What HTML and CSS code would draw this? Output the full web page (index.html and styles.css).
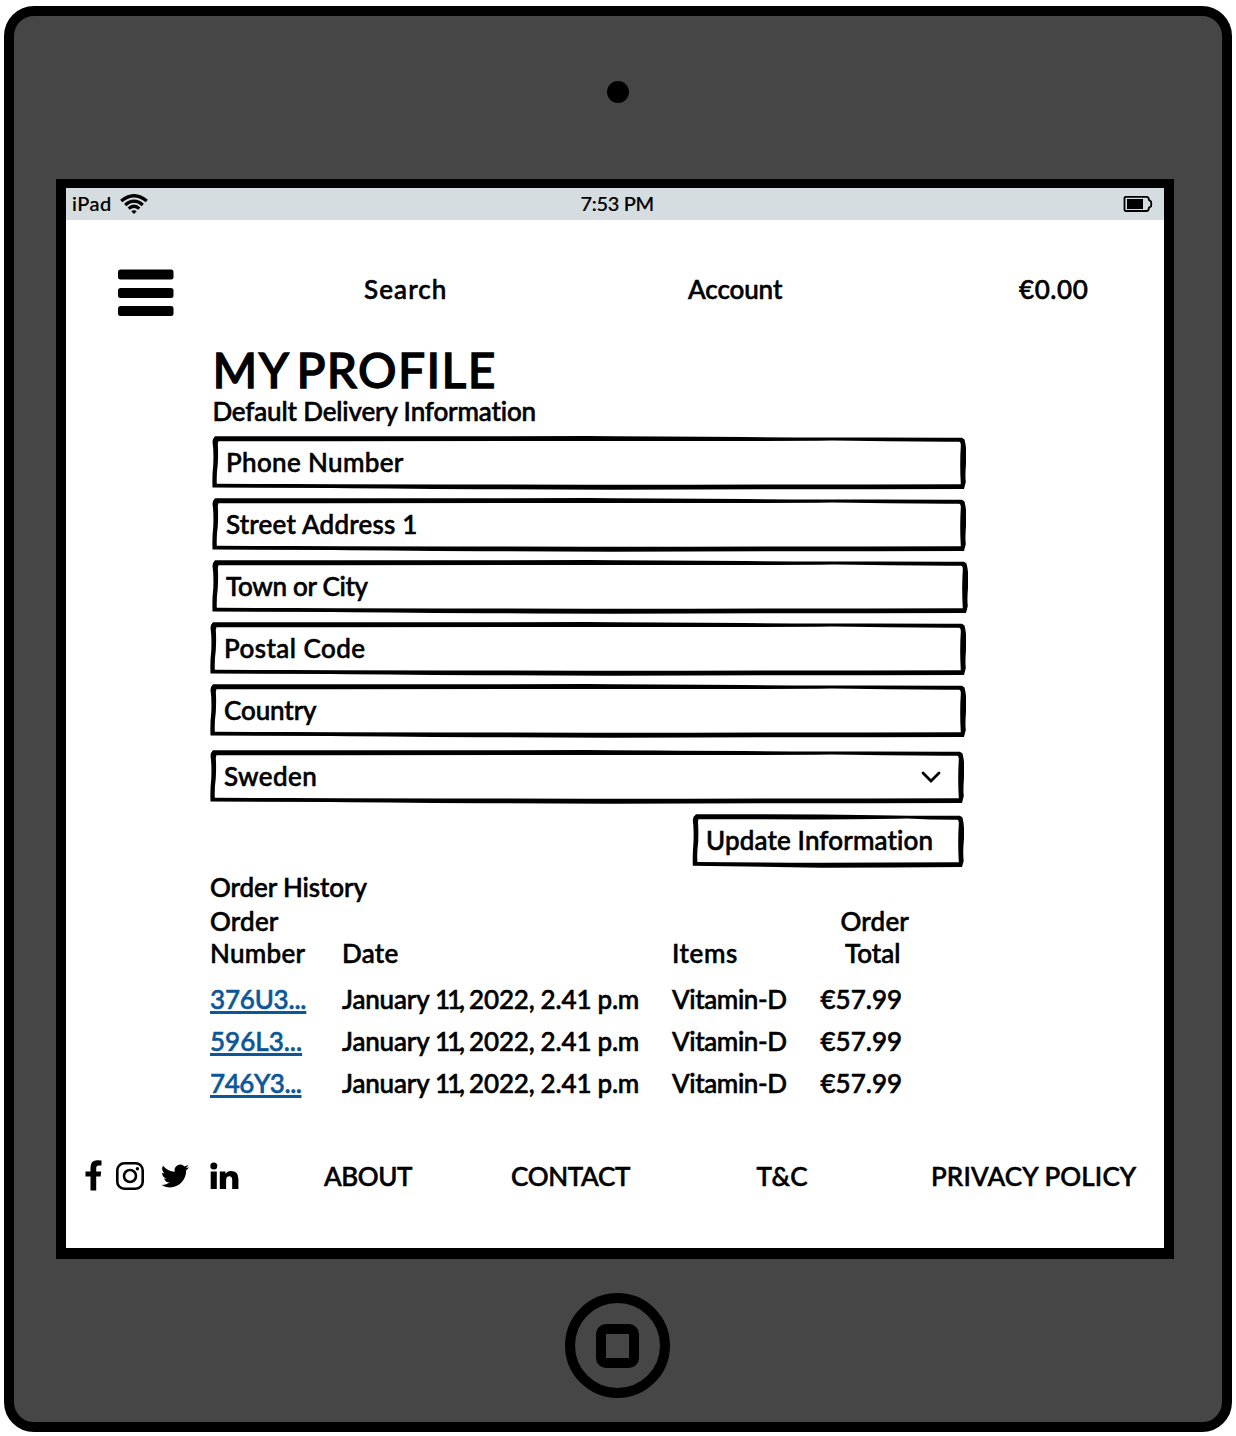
FILE: index.html
```html
<!DOCTYPE html>
<html lang="en">
<head>
<meta charset="utf-8">
<title>My Profile</title>
<link rel="stylesheet" href="styles.css">
</head>
<body>
<svg class="defs" aria-hidden="true">
  <symbol id="box" viewBox="0 0 754 54" preserveAspectRatio="none">
    <path fill-rule="evenodd" d="M1 3 L3 .3 Q200 .2 376 .1 Q560 1.400 660 1.500 T750 1.800 L752.500 3.500 Q755.200 14 754 28 Q753 40 753.800 46 L752 52.900 Q600 53.100 400 53.700 Q220 53 120 51.900 L.5 51.500 Q0 40 1.300 28 Q1.800 14 .5 6Z M6.400 5.300 Q200 5.200 376 5 Q560 5.300 620 4.600 Q700 5.700 747 5.800 Q749 6 748.800 10 Q747.600 28 748.800 48.200 Q600 48.400 400 48.800 Q200 48.400 80 48 L4.800 47.800 Q4.400 38 5.800 28 Q6.400 16 5.800 8Z"/>
  </symbol>
</svg>
<div class="device">
  <div class="camera"></div>
  <div class="screen">
    <div class="status">
      <div class="carrier"><span class="t ipad">iPad</span>
        <svg width="28" height="20" viewBox="0 0 28 20" fill="none" stroke="#000" stroke-width="3.300"><path d="M1.200 7Q14-3.600 26.800 7M5.200 10.900Q14 3.400 22.800 10.900M8.700 14.600Q14 9.800 19.300 14.600"/><path d="M11.300 17.300Q14 15 16.700 17.300L14 19.900Z" fill="#000" stroke="none"/></svg>
      </div>
      <span class="t clock">7:53 PM</span>
      <svg width="30" height="18" viewBox="0 0 30 18"><path d="M3 1.800H23.500Q25.800 1.800 26 5L28 6.500Q28.600 9 28 11.500L26 12.600Q25.800 16 23.500 16H3Q1.500 16 1.500 14.500V3.300Q1.500 1.800 3 1.800Z" fill="none" stroke="#000" stroke-width="1.800"/><path d="M4 4H20V14H4Z"/></svg>
    </div>
    <nav class="nav">
      <svg width="56" height="48" viewBox="0 0 56 48"><rect y=".5" width="55.500" height="10" rx="2.500"/><rect y="19" width="55.500" height="10" rx="2.500"/><rect y="37" width="55.500" height="10" rx="2.500"/></svg>
      <span class="t search">Search</span>
      <span class="t account">Account</span>
      <span class="t basket">€0.00</span>
    </nav>
    <main class="main">
      <h1 class="title">MY PROFILE</h1>
      <p><span class="t subtitle">Default Delivery Information</span></p>
      <form class="form">
        <div class="field in"><svg><use href="#box"/></svg><span class="t phone">Phone Number</span></div>
        <div class="field in"><svg><use href="#box"/></svg><span class="t street">Street Address 1</span></div>
        <div class="field in wide"><svg><use href="#box"/></svg><span class="t town">Town or City</span></div>
        <div class="field wide"><svg><use href="#box"/></svg><span class="t postal">Postal Code</span></div>
        <div class="field wide"><svg><use href="#box"/></svg><span class="t country">Country</span></div>
        <div class="field select"><svg><use href="#box"/></svg><span class="t sweden">Sweden</span>
          <svg class="chevron" viewBox="0 0 20 12"><path d="M2 2L10 10L18 2"/></svg></div>
        <div class="field button"><svg viewBox="0 0 272 54"><path fill-rule="evenodd" d="M1.500 3L4 .3Q90 .2 130 .4Q220 2 268 1.800L270.500 3.500Q273 14 271.700 28Q270.800 40 271.700 47L270 53Q200 53.500 130 53.700Q60 52.500 .8 51.800Q.4 40 1.500 28Q2 14 .8 6ZM6.400 5.300Q70 5.200 120 5.400Q180 5.300 215 4.600Q240 5.900 265 5.800Q267 6 266.800 10Q265.600 28 266.800 48.200Q200 48.300 130 48.800Q60 48.400 5.400 48Q4.800 38 6.200 28Q6.600 16 6 8Z"/></svg><span class="t update">Update Information</span></div>
      </form>
      <p class="history"><span class="t orders">Order History</span></p>
      <div class="row head">
        <div><span class="t order">Order</span><br><span class="t number">Number</span></div>
        <div><span class="t date">Date</span></div>
        <div><span class="t items">Items</span></div>
        <div class="total"><span class="t order">Order</span><br><span class="t sum">Total</span></div>
      </div>
      <div class="row"><div><a class="t tight">376U3...</a></div><div><span class="t day">January <span class="num">11,</span> 2022, 2.41 p.m</span></div><div><span class="t item">Vitamin-D</span></div><div><span class="t cost">€57.99</span></div></div>
      <div class="row"><div><a class="t">596L3...</a></div><div><span class="t day">January <span class="num">11,</span> 2022, 2.41 p.m</span></div><div><span class="t item">Vitamin-D</span></div><div><span class="t cost">€57.99</span></div></div>
      <div class="row"><div><a class="t tighter">746Y3...</a></div><div><span class="t day">January <span class="num">11,</span> 2022, 2.41 p.m</span></div><div><span class="t item">Vitamin-D</span></div><div><span class="t cost">€57.99</span></div></div>
    </main>
    <footer class="footer">
      <svg width="17" height="31" viewBox="0 0 17 31"><path d="M16.500 .5V5.500H13.800Q11.200 5.500 11.200 8V11.500H16.200L15.600 16.500H11.200V30.500H5.500V16.500H.5V11.500H5.500V7.500Q5.500 .3 12.300 .3Q15 .3 16.500 .5Z"/></svg>
      <svg width="28" height="28" viewBox="0 0 28 28" fill="none" stroke="#000" stroke-width="2.600"><rect x="1.300" y="1.300" width="25.400" height="25.400" rx="7"/><circle cx="14" cy="14" r="6"/><circle cx="21.400" cy="6.700" r="1.700" fill="#000" stroke="none"/></svg>
      <svg width="28" height="28" viewBox="0 0 24 24"><path d="M23.950 4.570a10 10 0 0 1-2.820.770 4.960 4.960 0 0 0 2.160-2.720c-.950.550-2 .950-3.130 1.180a4.920 4.920 0 0 0-8.380 4.480C7.690 8.090 4.070 6.130 1.640 3.160a4.820 4.820 0 0 0-.670 2.480c0 1.710.870 3.210 2.190 4.100a4.900 4.900 0 0 1-2.230-.620v.060a4.920 4.920 0 0 0 3.950 4.830 5 5 0 0 1-2.210.080 4.940 4.940 0 0 0 4.600 3.420A9.870 9.870 0 0 1 0 19.540a13.990 13.990 0 0 0 7.550 2.210c9.050 0 14-7.500 14-13.980 0-.210 0-.420-.020-.630a9.940 9.940 0 0 0 2.420-2.570z"/></svg>
      <svg width="29" height="28" viewBox="0 0 29 28"><circle cx="3.800" cy="3.900" r="3.500"/><path d="M.7 9.500H6.800V27H.7ZM9.800 9.500H15.500V12Q17.300 9.100 21 9.100Q28.400 9.100 28.400 17V27H22.200V18Q22.200 14.200 19.400 14.200Q16.100 14.200 16.100 18.200V27H9.800Z"/></svg>
      <span class="t about">ABOUT</span>
      <span class="t contact">CONTACT</span>
      <span class="t terms">T&amp;C</span>
      <span class="t privacy">PRIVACY POLICY</span>
    </footer>
  </div>
  <div class="home"><div></div></div>
</div>
</body>
</html>
```
FILE: styles.css
```css
* { box-sizing: border-box; }
body { margin: 0; background: #fff; color: #000; font: 500 26px/32px Lato, sans-serif; font-variant-ligatures: none; -webkit-text-stroke: .6px; }
h1, p { margin: 0; }
svg { display: block; flex: none; }
.defs { position: absolute; width: 0; height: 0; }
.t { white-space: nowrap; display: inline-block; }

.device { margin: 6px 4px 4px; width: 1228px; height: 1426px; border: 10px solid #000; border-radius: 30px; background: #464646; display: flex; flex-direction: column; }
.camera { width: 22px; height: 22px; margin: 65px 0 0 593px; border-radius: 50%; background: #000; }
.screen { width: 1118px; height: 1080px; margin: 76px 0 0 42px; border: solid #000; border-width: 9px 10px 11px; background: #fff; }
.home { width: 105px; height: 105px; margin: 34.4px 0 0 551.4px; border: 10px solid #000; border-radius: 50%; display: grid; place-items: center; }
.home div { width: 43px; height: 44px; border: 10px solid #000; border-radius: 10px; }

.status { height: 32px; background: #d6dde0; display: grid; grid-template-columns: 514.5px 1fr 41px; align-items: center; font-size: 20px; line-height: 28px; -webkit-text-stroke: .2px; }
.status .t { padding-bottom: 2px; }
.carrier { display: flex; align-items: center; gap: 8px; padding-left: 6px; }
.ipad { letter-spacing: .5px; }
.clock { letter-spacing: -.35px; }

.nav { height: 123px; padding: 49px 0 0 51.5px; display: grid; grid-template-columns: 246.5px 324px 331px 1fr; align-items: start; }
.nav .t { padding-top: 4px; }
.search { letter-spacing: 1.1px; }
.account { letter-spacing: -.1px; }
.basket { letter-spacing: .6px; }

.main { padding-left: 144px; }
.title { height: 52px; font-size: 48px; line-height: 54px; font-weight: 500; padding-left: 3px; letter-spacing: 1.4px; word-spacing: -5.5px; -webkit-text-stroke: 1.3px; margin-left: -.5px; }
.subtitle { margin-left: 2.4px; letter-spacing: -.15px; }
.form { margin-top: 9px; display: grid; gap: 8px; }
.field { display: grid; width: 754px; height: 54px; align-items: center; }
.field > * { grid-area: 1 / 1; }
.field > svg { width: 100%; height: 54px; }
.field .t { padding: 0 0 2px 14px; }
.in { margin-left: 2px; }
.wide { width: 756px; }
.select { margin-top: 4px; }
.field > .chevron { width: 20px; height: 12px; margin-left: 711px; fill: none; stroke: #000; stroke-width: 2.8; stroke-linecap: round; }
.button { width: 272px; margin: 2px 0 0 482px; }
.phone { letter-spacing: .35px; }
.street { letter-spacing: .2px; }
.town { letter-spacing: -.3px; }
.postal { letter-spacing: .45px; }
.country { letter-spacing: -.1px; }
.sweden { letter-spacing: .4px; }
.update { letter-spacing: .15px; }

.history { margin-top: 3px; }
.row { height: 42px; display: grid; grid-template-columns: 132px 330px 148.5px 86px; }
.head { height: 78px; margin-top: 2px; align-items: start; }
.head div:nth-child(2), .head div:nth-child(3) { padding-top: 32px; }
.head .total { padding-left: 20px; }
.orders { letter-spacing: -.1px; }
.order { letter-spacing: .2px; }
.number { letter-spacing: .3px; }
.date { letter-spacing: .3px; }
.items { letter-spacing: .6px; }
.sum { margin-left: 4.5px; }
.day { letter-spacing: -.15px; word-spacing: -.4px; }
.num { letter-spacing: -3px; margin-right: 1px; }
.item { letter-spacing: -.4px; }
a { color: #0b5798; text-decoration: underline 2.5px; text-underline-offset: 2px; }
.tight { letter-spacing: -.2px; }
.tighter { letter-spacing: -.45px; }

.footer { height: 32px; margin-top: 51px; padding-left: 19px; display: grid; grid-template-columns: 30.6px 45.4px 49.5px 113.5px 187px 245.500px 174.5px 1fr; align-items: center; }
.footer svg:first-child { margin-top: -1px; }
.about { letter-spacing: -.4px; }
.contact { letter-spacing: -.3px; }
.terms { letter-spacing: .2px; }
.privacy { letter-spacing: .15px; }
```
